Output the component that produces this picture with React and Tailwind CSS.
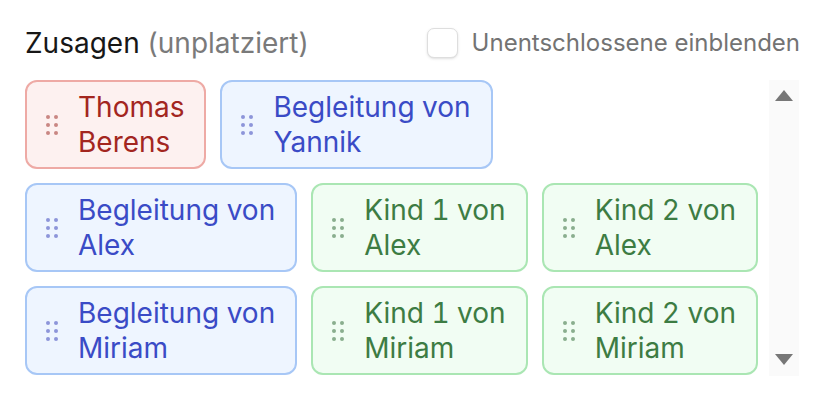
import React from "react";

const tones = {
  red: {
    box: "bg-[#fdf1f0] border-[#eeaaa5] text-[#a3261f]",
    dot: "bg-[#c98783]",
  },
  blue: {
    box: "bg-[#eef5ff] border-[#a7c7f6] text-[#3a4bc6]",
    dot: "bg-[#8d95da]",
  },
  green: {
    box: "bg-[#f1fdf3] border-[#aae6b3] text-[#3d7c43]",
    dot: "bg-[#8aae8e]",
  },
};

const rows = [
  [
    { tone: "red", lines: ["Thomas", "Berens"] },
    { tone: "blue", lines: ["Begleitung von", "Yannik"] },
  ],
  [
    { tone: "blue", lines: ["Begleitung von", "Alex"] },
    { tone: "green", lines: ["Kind 1 von", "Alex"] },
    { tone: "green", lines: ["Kind 2 von", "Alex"] },
  ],
  [
    { tone: "blue", lines: ["Begleitung von", "Miriam"] },
    { tone: "green", lines: ["Kind 1 von", "Miriam"] },
    { tone: "green", lines: ["Kind 2 von", "Miriam"] },
  ],
];

function Handle({ dot }) {
  return (
    <div className="grid grid-cols-2 gap-x-[4px] gap-y-[4px] w-[12px] shrink-0">
      {[0, 1, 2, 3, 4, 5].map((i) => (
        <span key={i} className={`block w-[4px] h-[4px] rounded-full ${dot}`}></span>
      ))}
    </div>
  );
}

function GuestChip({ tone, lines }) {
  const t = tones[tone];
  return (
    <div
      className={`flex items-center gap-[20px] border-2 rounded-[12px] pl-[19px] pr-[20px] py-[7.5px] ${t.box}`}
    >
      <Handle dot={t.dot} />
      <div className="text-[28px] leading-[35px] tabular-nums">
        {lines.map((l, i) => (
          <div key={i} className="whitespace-nowrap">
            {l}
          </div>
        ))}
      </div>
    </div>
  );
}

export default function App() {
  return (
    <div
      className="w-[824px] h-[400px] bg-white pl-[25px] pt-[28px] overflow-hidden"
      style={{ fontFamily: "Inter, 'Noto Sans', sans-serif" }}
    >
      <div className="flex items-center justify-between w-[775px] h-[30px]">
        <div className="text-[28px] text-[#171717]">
          Zusagen <span className="text-[#7a7a7a]">(unplatziert)</span>
        </div>
        <label className="flex items-center gap-[14px]">
          <span className="block w-[31px] h-[30px] rounded-[7px] border border-[#dedede] bg-white shadow-sm"></span>
          <span className="text-[24px] text-[#737373]">Unentschlossene einblenden</span>
        </label>
      </div>

      <div className="flex mt-[22px]">
        <div className="flex flex-col gap-[14px] w-[744px]">
          {rows.map((row, r) => (
            <div key={r} className="flex gap-[14px]">
              {row.map((g, i) => (
                <GuestChip key={i} {...g} />
              ))}
            </div>
          ))}
        </div>

        {/* scrollbar track */}
        <div className="w-[30px] h-[296px] bg-[#fafafa] flex flex-col items-center justify-between pt-[10px] pb-[11px]">
          <div className="w-0 h-0 border-l-[9.5px] border-r-[9.5px] border-b-[11px] border-l-transparent border-r-transparent border-b-[#777]"></div>
          <div className="w-0 h-0 border-l-[9.5px] border-r-[9.5px] border-t-[11px] border-l-transparent border-r-transparent border-t-[#777]"></div>
        </div>
      </div>
    </div>
  );
}
